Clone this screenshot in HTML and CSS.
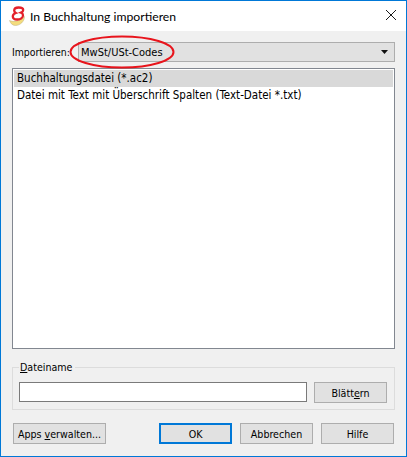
FILE: index.html
```html
<!DOCTYPE html>
<html lang="de">
<head>
<meta charset="utf-8">
<title>In Buchhaltung importieren</title>
<link rel="stylesheet" href="styles.css">
</head>
<body>
<div class="window">
  <header class="titlebar">
    <svg class="app-icon" width="20" height="20" viewBox="0 0 20 20">
      <path d="M0.5 14.5C4 16 10 16 15.5 10.5C15.5 15.5 11 19.5 6.5 19.5C3.5 19.5 1.5 17.5 0.5 14.5Z" fill="#f4dc7c" stroke="#b9b08a" stroke-width="0.5"/>
      <path d="M9.5 1.5C6.8 1.5 5.2 3 5.2 4.6C5.2 5.7 5.9 6.5 6.8 7C5 7.6 3.8 9 3.8 10.5C3.8 12.4 5.6 13.5 8.2 13.5C11.5 13.5 14 11.6 14 9.2C14 7.9 13.2 7 12 6.6C13.3 6 14.2 5 14.2 3.9C14.2 2.4 12.3 1.5 9.5 1.5Z" fill="none" stroke="#e3202a" stroke-width="2.3"/>
    </svg>
    <span class="title">In Buchhaltung importieren</span>
    <svg class="close" width="10" height="10" viewBox="0 0 10 10"><path d="M0 0L10 10M10 0L0 10" stroke="#1a1a1a" stroke-width="1" fill="none"/></svg>
  </header>
  <main class="content">
    <div class="import-row">
      <label class="import-label">Importieren:</label>
      <div class="combo">
        <span>MwSt/USt-Codes</span>
        <svg class="arrow" width="7" height="4" viewBox="0 0 7 4"><path d="M0 0H7L3.5 4Z" fill="#111"/></svg>
      </div>
      <svg class="ellipse" width="108" height="36" viewBox="0 0 108 36"><ellipse cx="54" cy="18" rx="51.5" ry="15.5" fill="none" stroke="#e8141c" stroke-width="2"/></svg>
    </div>
    <ul class="list">
      <li class="selected">Buchhaltungsdatei (*.ac2)</li>
      <li>Datei mit Text mit Überschrift Spalten (Text-Datei *.txt)</li>
    </ul>
    <fieldset class="group">
      <legend><u>D</u>ateiname</legend>
      <div class="file-row">
        <div class="input"></div>
        <button class="btn browse">Blätt<u>e</u>rn</button>
      </div>
    </fieldset>
    <footer class="actions">
      <button class="btn apps">Apps <u>v</u>erwalten...</button>
      <button class="btn ok">OK</button>
      <button class="btn cancel">Abbrechen</button>
      <button class="btn help">Hilfe</button>
    </footer>
  </main>
</div>
</body>
</html>
```
FILE: styles.css
```css
html, body { margin: 0; padding: 0; }
body { width: 407px; height: 457px; overflow: hidden; font-family: "DejaVu Sans", sans-serif; font-stretch: condensed; font-size: 11.5px; color: #000; }
.window { box-sizing: border-box; width: 407px; height: 457px; border: 1px solid #0078d7; display: flex; flex-direction: column; background: #f0f0f0; }
.titlebar { height: 30px; flex: none; background: #fff; display: flex; align-items: center; padding: 0 10px 0 8px; }
.app-icon { flex: none; }
.title { margin-left: 1px; font-family: "Lato", sans-serif; font-stretch: normal; font-size: 12.2px; flex: 1; }
.close { flex: none; margin-bottom: 2px; }
.content { flex: 1; display: flex; flex-direction: column; padding: 11px 11px 0; }
.import-row { position: relative; display: flex; align-items: center; height: 20px; }
.import-label { width: 66px; flex: none; white-space: nowrap; font-size: 10.4px; }
.combo { flex: 1; height: 20px; box-sizing: border-box; background: #e1e1e1; border: 1px solid #adadad; display: flex; align-items: center; justify-content: space-between; padding: 0 6px 0 2px; font-size: 11px; }
.ellipse { position: absolute; left: 56px; top: -8px; }
.list { list-style: none; margin: 6px 0 0; padding: 1px 1px 0 1px; height: 281px; box-sizing: border-box; border: 1px solid #828790; background: #fff; }
.list li { height: 17px; line-height: 17px; padding-left: 3px; white-space: nowrap; }
.list .selected { background: #d9d9d9; }
.group { margin: 12px 0 0; padding: 0 7px 0 6px; height: 49px; box-sizing: border-box; border: 1px solid #dcdcdc; }
.group legend { padding: 0 3px 0 1px; line-height: 13px; font-size: 10.6px; }
.file-row { display: flex; align-items: flex-start; justify-content: space-between; margin-top: 8px; }
.input { width: 288px; height: 20px; box-sizing: border-box; background: #fff; border: 1px solid #7a7a7a; }
.btn { font: inherit; font-size: 10.6px; color: #000; box-sizing: border-box; height: 21px; padding: 0; background: #e1e1e1; border: 1px solid #adadad; white-space: nowrap; }
.browse { width: 73px; }
.actions { display: flex; margin-top: 13px; align-items: center; }
.apps { width: 93px; margin-left: 1px; }
.ok { width: 73px; margin-left: 53px; border: 2px solid #0078d7; }
.cancel { width: 73px; margin-left: 8px; }
.help { width: 73px; margin-left: 8px; }
```
